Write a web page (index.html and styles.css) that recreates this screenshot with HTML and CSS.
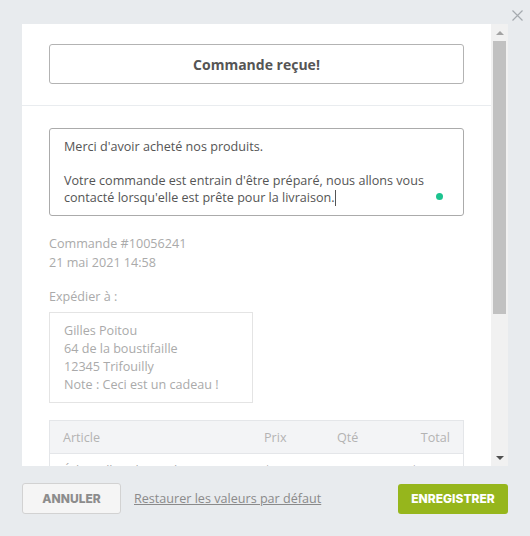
FILE: index.html
```html
<!DOCTYPE html>
<html lang="fr">
<head>
<meta charset="utf-8">
<title>Commande reçue</title>
<link rel="stylesheet" href="styles.css">
</head>
<body>
<div class="page">
  <button class="close" aria-label="Fermer">
    <svg width="11" height="11" viewBox="0 0 11 11"><path d="M0.5 0.5 L10.5 10.5 M10.5 0.5 L0.5 10.5" stroke="#a5aaaf" stroke-width="1.2" fill="none"/></svg>
  </button>
  <div class="panel">
    <div class="content">
      <div class="head">
        <div class="title">Commande reçue!</div>
      </div>
      <div class="body">
        <div class="message">
          <p>Merci d'avoir acheté nos produits.</p>
          <p class="gap">Votre commande est entrain d'être préparé, nous allons vous<br>contacté lorsqu'elle est prête pour la livraison.<span class="caret"></span></p>
          <span class="dot"></span>
        </div>
        <div class="meta">Commande #10056241<br>21 mai 2021 14:58</div>
        <div class="label">Expédier à :</div>
        <div class="address">Gilles Poitou<br>64 de la boustifaille<br>12345 Trifouilly<br>Note : Ceci est un cadeau !</div>
        <div class="table">
          <div class="row thead">
            <span>Article</span><span>Prix</span><span>Qté</span><span class="num">Total</span>
          </div>
          <div class="row">
            <span>Échantillon de produit</span><span>$10.00</span><span>1</span><span class="num">$10.00</span>
          </div>
        </div>
      </div>
    </div>
    <div class="scrollbar">
      <div class="sb-btn up"></div>
      <div class="sb-track"><div class="sb-thumb"></div></div>
      <div class="sb-btn down"></div>
    </div>
  </div>
  <div class="footer">
    <button class="btn cancel">ANNULER</button>
    <a class="link" href="#">Restaurer les valeurs par défaut</a>
    <button class="btn save">ENREGISTRER</button>
  </div>
</div>
</body>
</html>
```
FILE: styles.css
```css
html, body {
  margin: 0;
  padding: 0;
}
body {
  background: #e8ebee;
  font-family: "Open Sans", "DejaVu Sans", sans-serif;
  font-size: 12.6px;
  width: 530px;
  height: 536px;
  overflow: hidden;
}
.page {
  position: relative;
  padding: 24px 22px 0;
}
.close {
  position: absolute;
  top: 10px;
  right: 7px;
  width: 11px;
  height: 11px;
  padding: 0;
  border: 0;
  background: none;
  display: block;
}
.close svg { display: block; }

.panel {
  display: flex;
  height: 442px;
}
.content {
  flex: 1;
  background: #fff;
  overflow: hidden;
}
.scrollbar {
  width: 17px;
  background: #f1f1f1;
  display: flex;
  flex-direction: column;
}
.sb-btn {
  height: 17px;
  display: flex;
  align-items: center;
  justify-content: center;
}
.sb-btn::before {
  content: "";
  width: 0;
  height: 0;
  border-left: 4px solid transparent;
  border-right: 4px solid transparent;
}
.up::before { border-bottom: 4px solid #a3a3a3; }
.down::before { border-top: 4px solid #505050; }
.sb-track {
  flex: 1;
  padding: 0 2px;
}
.sb-thumb {
  height: 273px;
  background: #c1c1c1;
}

.head {
  padding: 20px 27px 21px;
  border-bottom: 1px solid #e9ecef;
}
.title {
  height: 40px;
  box-sizing: border-box;
  border: 1px solid #b3b3b3;
  border-radius: 3px;
  display: flex;
  align-items: center;
  justify-content: center;
  font-weight: 700;
  font-size: 14px;
  color: #555;
}
.body {
  padding: 22px 27px 0;
}
.message {
  position: relative;
  height: 88px;
  box-sizing: border-box;
  border: 1px solid #ababab;
  border-radius: 3px;
  padding: 9px 14px;
  line-height: 17px;
  color: #555;
}
.message p { margin: 0; }
.message .gap { margin-top: 17px; }
.caret {
  display: inline-block;
  width: 1px;
  height: 16px;
  background: #555;
  vertical-align: -4px;
}
.dot {
  position: absolute;
  right: 20px;
  bottom: 15px;
  width: 7px;
  height: 7px;
  border-radius: 50%;
  background: #1cc38f;
}
.meta {
  margin-top: 19px;
  line-height: 18.5px;
  color: #aaa;
}
.label {
  margin-top: 16px;
  line-height: 18px;
  color: #aaa;
}
.address {
  margin-top: 6px;
  width: 204px;
  box-sizing: border-box;
  border: 1px solid #e4e4e4;
  padding: 9px 14px 8px;
  line-height: 18px;
  color: #aaa;
}
.table {
  margin-top: 17px;
  border: 1px solid #e4e6e9;
}
.row {
  display: grid;
  grid-template-columns: 201px 73px 1fr auto;
  align-items: center;
  height: 32px;
  padding: 0 13px;
  color: #aaa;
}
.thead {
  background: #f3f4f6;
  border-bottom: 1px solid #e4e6e9;
  color: #b3b3b3;
}
.num { text-align: right; }

.footer {
  display: flex;
  align-items: center;
  margin-top: 17px;
}
.btn {
  font-family: "Inter", "DejaVu Sans", sans-serif;
  font-weight: 800;
  font-size: 12px;
  border-radius: 3px;
  padding: 0;
  cursor: pointer;
}
.cancel {
  width: 99px;
  height: 31px;
  box-sizing: border-box;
  border: 1px solid #d2d2d2;
  background: #f5f5f5;
  color: #8c8c8c;
}
.link {
  margin-left: 13px;
  color: #8a8a8a;
  text-decoration: underline;
  font-size: 12.6px;
}
.save {
  margin-left: auto;
  width: 110px;
  height: 30px;
  border: 0;
  background: #96b61c;
  color: #fff;
}
```
